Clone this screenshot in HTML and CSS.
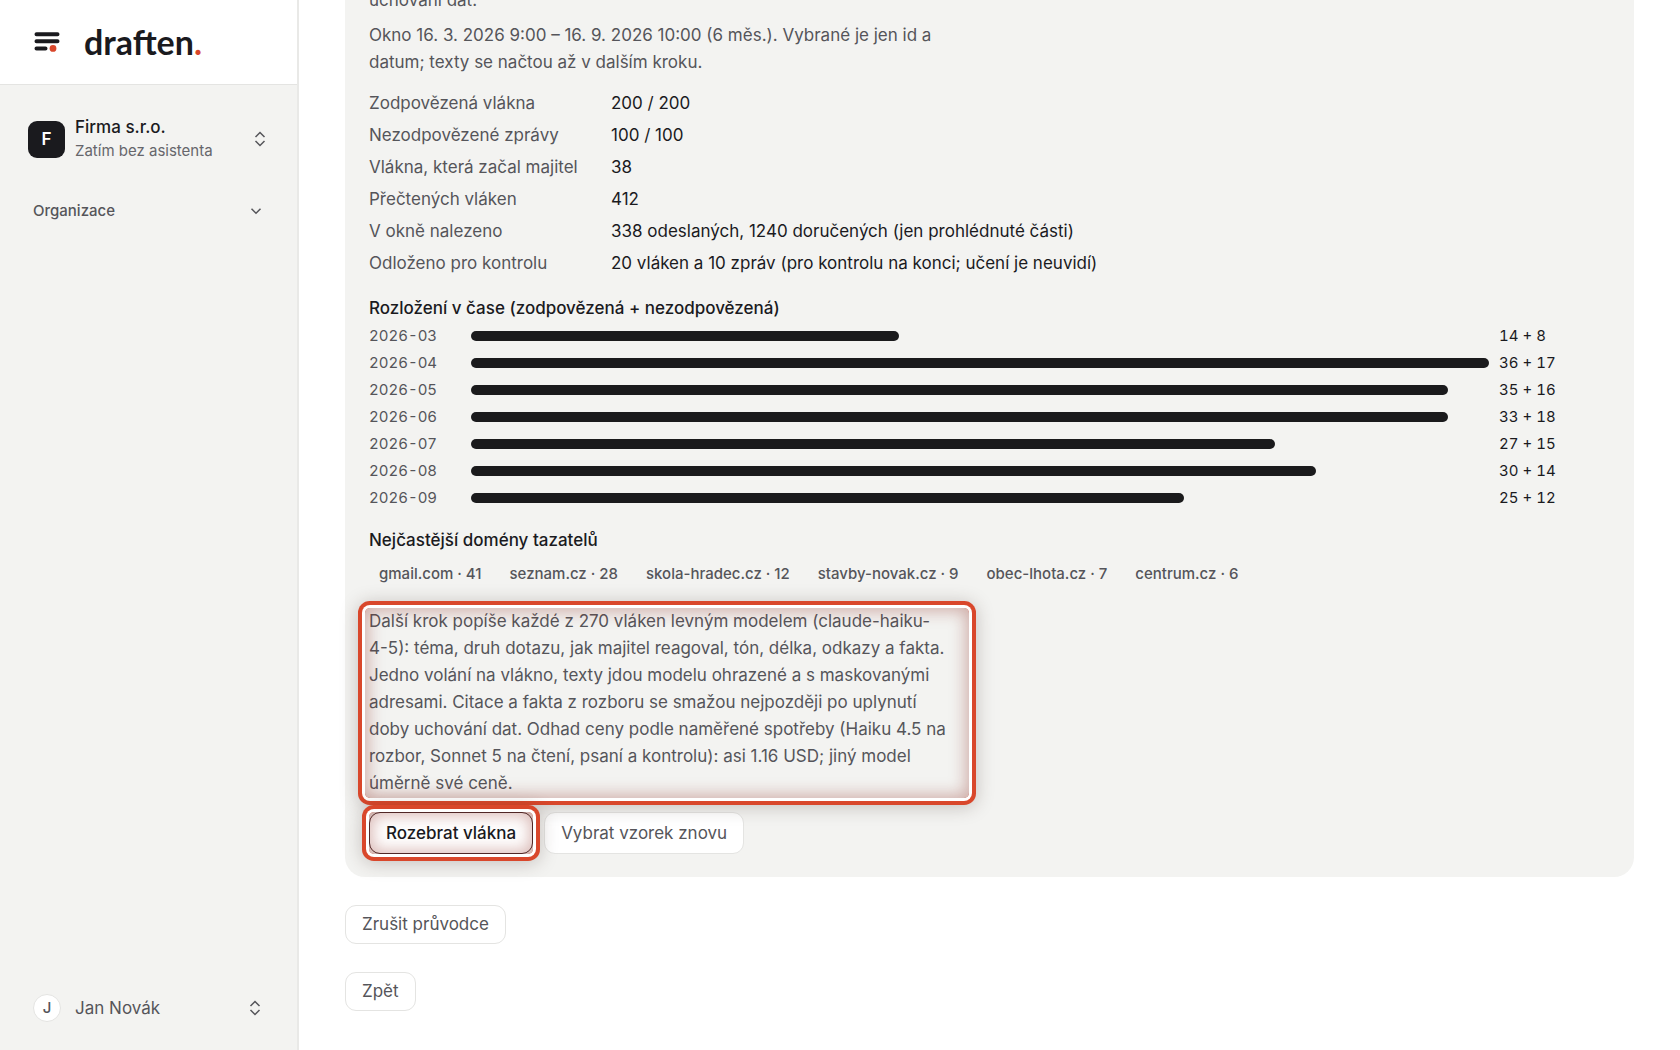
FILE: index.html
```html
<!DOCTYPE html>
<html lang="cs">
<head>
  <meta charset="UTF-8">
  <meta name="viewport" content="width=device-width, initial-scale=1.0">
  <link rel="stylesheet" href="styles.css">
  <title>draften</title>
</head>
<body>
  <aside class="sidebar">
    <a class="brand" href="#">
      <svg class="brand-mark" width="26" height="20" viewBox="0 0 26 20">
        <g stroke="#1a1a1e" stroke-width="4" stroke-linecap="round">
          <path d="M2.5 2.2h21M2.5 9.2h21M2.5 16.4h9"/>
        </g>
        <circle cx="19" cy="16.4" r="3.4" fill="#d9472b"/>
      </svg>
      <span class="brand-name">draften<span class="brand-dot">.</span></span>
    </a>

    <nav class="nav">
      <button class="org">
        <span class="org-logo">F</span>
        <span class="org-text">
          <span class="org-name">Firma s.r.o.</span>
          <span class="org-note">Zatím bez asistenta</span>
        </span>
        <svg class="icon" width="10" height="14" viewBox="0 0 10 14"><path d="M.5 5L5 .5 9.500 5M.5 9L5 13.500 9.500 9"/></svg>
      </button>
      <button class="group">
        <span>Organizace</span>
        <svg class="icon" width="10" height="6" viewBox="0 0 10 6"><path d="M.5 .7L5 5.200 9.500 .7"/></svg>
      </button>
    </nav>

    <button class="user">
      <span class="avatar">J</span>
      <span class="user-name">Jan Novák</span>
      <svg class="icon" width="10" height="14" viewBox="0 0 10 14"><path d="M.5 5L5 .5 9.500 5M.5 9L5 13.500 9.500 9"/></svg>
    </button>
  </aside>

  <main class="main">
    <section class="panel">
      <p class="text">uchování dat.</p>
      <p class="text">Okno 16. 3. 2026 9:00 – 16. 9. 2026 10:00 (6 měs.). Vybrané je jen id a datum; texty se načtou až v dalším kroku.</p>

      <dl class="facts">
        <dt>Zodpovězená vlákna</dt><dd>200 / 200</dd>
        <dt>Nezodpovězené zprávy</dt><dd>100 / 100</dd>
        <dt>Vlákna, která začal majitel</dt><dd>38</dd>
        <dt>Přečtených vláken</dt><dd>412</dd>
        <dt>V okně nalezeno</dt><dd>338 odeslaných, 1240 doručených (jen prohlédnuté části)</dd>
        <dt>Odloženo pro kontrolu</dt><dd>20 vláken a 10 zpráv (pro kontrolu na konci; učení je neuvidí)</dd>
      </dl>

      <h3>Rozložení v čase (zodpovězená + nezodpovězená)</h3>
      <ul class="chart">
        <li><span class="month">2026-03</span><span><span class="bar" style="width: 42%"></span></span><span>14 + 8</span></li>
        <li><span class="month">2026-04</span><span><span class="bar" style="width: 100%"></span></span><span>36 + 17</span></li>
        <li><span class="month">2026-05</span><span><span class="bar" style="width: 96%"></span></span><span>35 + 16</span></li>
        <li><span class="month">2026-06</span><span><span class="bar" style="width: 96%"></span></span><span>33 + 18</span></li>
        <li><span class="month">2026-07</span><span><span class="bar" style="width: 79%"></span></span><span>27 + 15</span></li>
        <li><span class="month">2026-08</span><span><span class="bar" style="width: 83%"></span></span><span>30 + 14</span></li>
        <li><span class="month">2026-09</span><span><span class="bar" style="width: 70%"></span></span><span>25 + 12</span></li>
      </ul>

      <h3>Nejčastější domény tazatelů</h3>
      <ul class="domains">
        <li>gmail.com · 41</li>
        <li>seznam.cz · 28</li>
        <li>skola-hradec.cz · 12</li>
        <li>stavby-novak.cz · 9</li>
        <li>obec-lhota.cz · 7</li>
        <li>centrum.cz · 6</li>
      </ul>

      <p class="text note highlight">Další krok popíše každé z 270 vláken levným modelem (claude-haiku-4-5): téma, druh dotazu, jak majitel reagoval, tón, délka, odkazy a fakta. Jedno volání na vlákno, texty jdou modelu ohrazené a s maskovanými adresami. Citace a fakta z rozboru se smažou nejpozději po uplynutí doby uchování dat. Odhad ceny podle naměřené spotřeby (Haiku 4.5 na rozbor, Sonnet 5 na čtení, psaní a kontrolu): asi 1.16 USD; jiný model úměrně své ceně.</p>

      <div class="actions">
        <button class="btn primary highlight">Rozebrat vlákna</button>
        <button class="btn">Vybrat vzorek znovu</button>
      </div>
    </section>

    <div class="footer">
      <button class="btn small">Zrušit průvodce</button>
      <button class="btn small">Zpět</button>
    </div>
  </main>
</body>
</html>
```
FILE: styles.css
```css
* {
  box-sizing: border-box;
}

body {
  display: flex;
  height: 100vh;
  margin: 0;
  overflow: hidden;
  font-family: Inter, sans-serif;
  font-size: 17px;
  line-height: 27px;
  color: #1a1a1e;
  background: #fff;
}

button {
  font: inherit;
  color: inherit;
  border: 0;
  background: none;
  cursor: pointer;
}

p, h3, ul, dl, dd {
  margin: 0;
  padding: 0;
}

ul {
  list-style: none;
}

/* sidebar */
.sidebar {
  display: flex;
  flex-direction: column;
  flex: 0 0 299px;
  background: #f3f3f1;
  border-right: 2px solid #e9e9e7;
}

.brand {
  display: flex;
  align-items: center;
  gap: 24px;
  height: 85px;
  padding: 0 34px;
  color: #1a1a1e;
  text-decoration: none;
  background: #fff;
  border-bottom: 1px solid #e4e4e2;
}

.brand-name {
  font-family: Lato, sans-serif;
  font-size: 34px;
  font-weight: 700;
  line-height: 40px;
}

.brand-dot {
  color: #d9472b;
}

.nav {
  display: flex;
  flex-direction: column;
  gap: 34px;
  flex: 1;
  padding: 30px 28px 0;
}

.icon {
  flex: none;
  margin-left: auto;
  overflow: visible;
  fill: none;
  stroke: #55555a;
  stroke-width: 1.5;
}

.org {
  display: flex;
  align-items: center;
  gap: 10px;
  padding: 0 4px 0 0;
  text-align: left;
}

.org-logo {
  width: 37px;
  height: 37px;
  line-height: 37px;
  border-radius: 9px;
  font-size: 17px;
  font-weight: 600;
  text-align: center;
  color: #fff;
  background: #1a1a1e;
}

.org-name,
.org-note {
  display: block;
  line-height: 24px;
}

.org-name {
  font-weight: 500;
}

.org-note {
  font-size: 15px;
  color: #66666b;
}

.group {
  display: flex;
  align-items: center;
  padding: 0 8px 0 5px;
  font-size: 15px;
  font-weight: 500;
  color: #55555a;
}

.user {
  display: flex;
  align-items: center;
  gap: 14px;
  padding: 0 37px 28px 33px;
  color: #55555a;
}

.avatar {
  width: 28px;
  height: 28px;
  border: 1px solid #e4e4e2;
  border-radius: 50%;
  font-size: 15px;
  font-weight: 500;
  line-height: 26px;
  background: #fff;
}

/* content */
.main {
  flex: 1;
  min-width: 0;
  padding: 0 46px;
}

/* the page is scrolled down, the first line is partly cut off */
.panel {
  margin-top: -37px;
  padding: 24px 24px 23px;
  border-radius: 20px;
  background: #f3f3f1;
}

.text {
  max-width: 600px;
  margin-bottom: 8px;
  color: #55555a;
}

.facts {
  display: grid;
  grid-template-columns: 214px 1fr;
  gap: 5px 28px;
  margin: 14px 0 18px;
}

.facts dt {
  color: #55555a;
}

h3 {
  font-size: 17px;
  font-weight: 500;
}

.chart {
  display: grid;
  gap: 3px;
  margin: 2px 0 17px;
  font-size: 15px;
  line-height: 24px;
  font-variant-numeric: tabular-nums;
}

.chart li {
  display: grid;
  grid-template-columns: 92px 1fr 111px;
  align-items: center;
  gap: 10px;
}

.month {
  color: #55555a;
}

.bar {
  display: block;
  height: 10px;
  border-radius: 5px;
  background: #1a1a1c;
}

.domains {
  display: flex;
  flex-wrap: wrap;
  gap: 8px;
  margin: 8px 0 22px;
  font-size: 15px;
  font-weight: 500;
  line-height: 24px;
  color: #55555a;
}

.domains li {
  padding: 0 10px;
}

/* red ring laid over the element */
.highlight {
  position: relative;
}

.highlight::after {
  content: "";
  position: absolute;
  inset: 0;
  border-radius: 5px;
  box-shadow:
    0 0 0 3px #fff,
    0 0 0 7px #d9472b,
    0 2px 18px 7px rgba(60, 40, 30, 0.25),
    inset 0 0 16px 3px rgba(140, 40, 30, 0.35);
  pointer-events: none;
}

.note {
  max-width: 604px;
  margin: 0 -4px 14px;
  padding: 0 22px 1px 4px;
}

.actions {
  display: flex;
  gap: 11px;
}

.btn {
  height: 42px;
  padding: 0 16px;
  border: 1px solid #e4e4e2;
  border-radius: 11px;
  color: #55555a;
  background: #fff;
}

.primary {
  border-color: #40282a;
  font-weight: 500;
  color: #1a1a1e;
}

.primary::after {
  inset: -1px;
}

.small {
  height: 39px;
}

.footer {
  display: flex;
  flex-direction: column;
  align-items: flex-start;
  gap: 28px;
  padding-top: 28px;
}
```
